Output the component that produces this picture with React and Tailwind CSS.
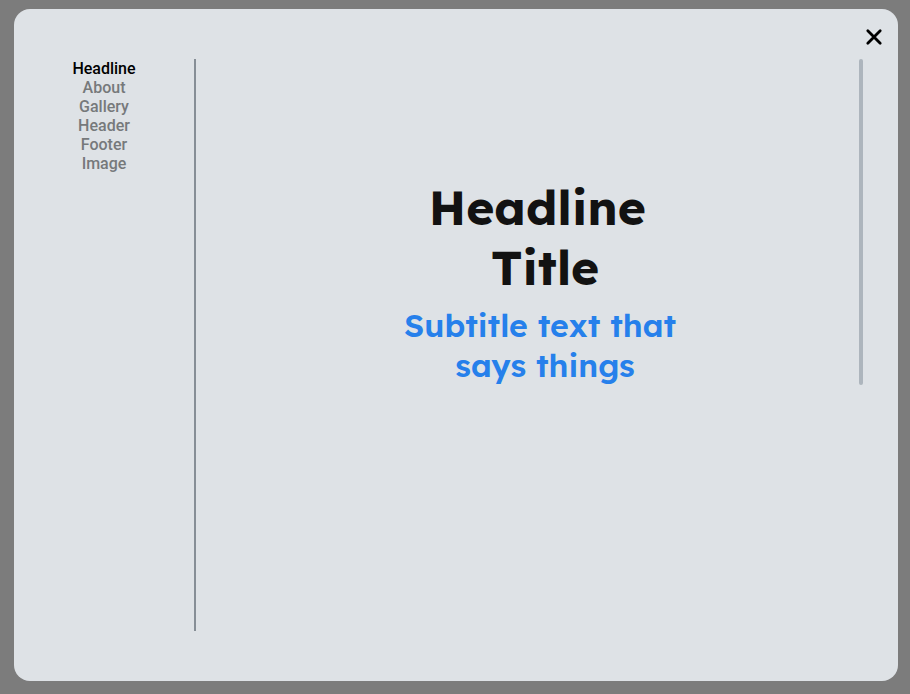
const sections = ["Headline", "About", "Gallery", "Header", "Footer", "Image"];

function CloseButton() {
  return (
    <button type="button" aria-label="Close" className="size-6 text-black">
      <svg viewBox="0 0 24 24" className="size-6" fill="none" stroke="currentColor" strokeWidth="2.8" strokeLinecap="round">
        <path d="M5.8 5.8 18.2 18.2M18.2 5.8 5.8 18.2" />
      </svg>
    </button>
  );
}

function SectionNav() {
  return (
    <nav className="w-[182px] shrink-0 border-r-2 border-[#868e96]">
      <ul className="text-center text-base leading-[19px] font-medium text-[#76797b]">
        {sections.map((name, i) => (
          <li key={name}>
            <a href={"#" + name.toLowerCase()} className={i === 0 ? "text-black" : "hover:text-black"}>
              {name}
            </a>
          </li>
        ))}
      </ul>
    </nav>
  );
}

function Preview() {
  return (
    <main className="flex flex-1 px-[35px]">
      <section className="flex flex-1 flex-col items-center pt-[118px] text-center font-['Lexend','Inter',sans-serif]">
        <h1 className="w-[280px] text-5xl leading-[60px] font-bold whitespace-break-spaces text-[#121212]">
          Headline Title
        </h1>
        <p className="mt-2 w-[300px] text-[32px] leading-10 font-semibold whitespace-break-spaces text-[#2680eb]">
          Subtitle text that says things
        </p>
      </section>
      <div className="w-1 shrink-0">
        <div className="h-[57%] rounded-xs bg-[#adb5bd]" />
      </div>
    </main>
  );
}

export default function App() {
  return (
    <div className="flex min-h-screen bg-[#7c7c7c] pt-[9px] pr-3 pb-[13px] pl-[14px] font-['Roboto',sans-serif]">
      <div role="dialog" aria-label="Add section" className="flex flex-1 flex-col rounded-2xl bg-[#dee2e6] pb-[50px]">
        <header className="flex h-[50px] justify-end pt-4 pr-3">
          <CloseButton />
        </header>
        <div className="flex flex-1">
          <SectionNav />
          <Preview />
        </div>
      </div>
    </div>
  );
}
